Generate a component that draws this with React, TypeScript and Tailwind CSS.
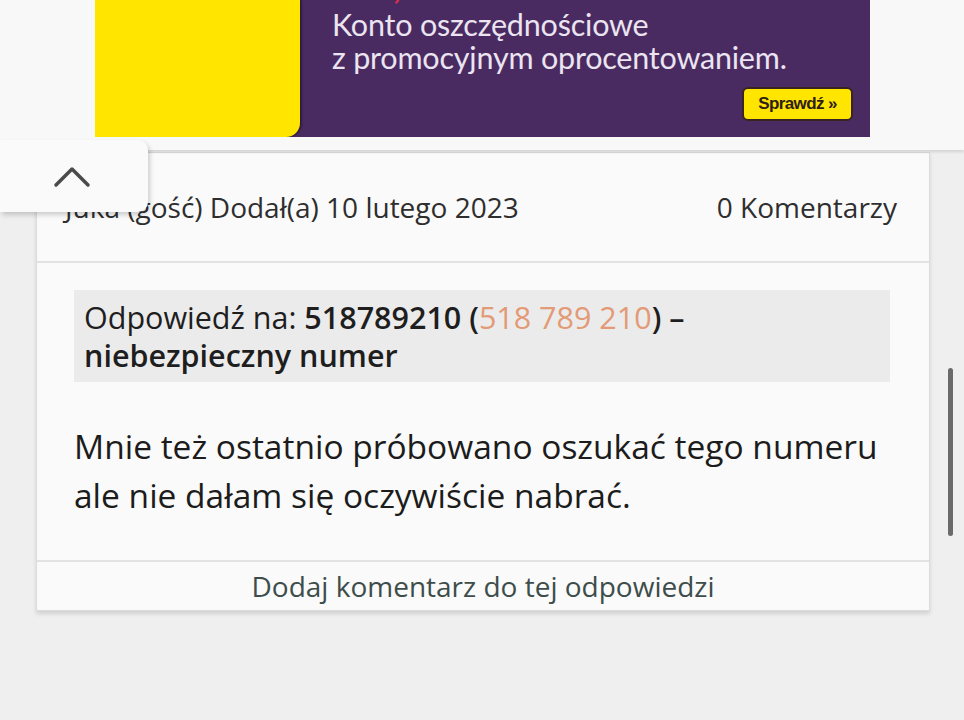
import React from "react";

export default function App() {
  const font = { fontFamily: '"Open Sans", "Noto Sans", sans-serif' };
  return (
    <div className="relative w-[964px] h-[720px] overflow-hidden bg-[#efefef]" style={font}>
      {/* top band with ad */}
      <div className="h-[150px] bg-[#f8f8f8] shadow-[0_2px_3px_rgba(0,0,0,0.12)] relative z-10">
        <div className="ml-[95px] w-[775px] h-[137px] bg-[#4a2b61] relative overflow-hidden flex">
          <div className="w-[205px] h-full bg-[#ffe500] rounded-br-[14px] shadow-[2px_0_2px_rgba(0,0,0,0.35)] shrink-0" />
          <div className="flex-1 relative pl-[32px]">
            <div className="absolute left-[20px] top-[-31px] text-[34px] font-bold text-[#f2eef6] whitespace-nowrap leading-[34px]" style={{ fontFamily: 'Lato, sans-serif' }}>
              Do <span className="text-[#e0314a]">7,00%</span> w skali roku
            </div>
            <div className="pt-[8px] text-[30.5px] leading-[33px] text-[#ebe4f1] tracking-[-0.2px]" style={{ fontFamily: 'Lato, sans-serif' }}>
              <div>Konto oszczędnościowe</div>
              <div>z promocyjnym oprocentowaniem.</div>
            </div>
            <div className="absolute left-[442px] top-[87px] w-[111px] h-[34px] rounded-[6px] bg-[#ffe500] border-2 border-[#3a2420] flex items-center justify-center text-[17px] font-bold text-[#2e2016] tracking-[-0.6px]" style={{ fontFamily: '"Liberation Sans", Arial, sans-serif' }}>
              Sprawdź »
            </div>
          </div>
        </div>
      </div>

      {/* card */}
      <div className="ml-[36px] mt-[2px] w-[894px] bg-[#fafafa] border border-[#dcdcdc] shadow-[0_3px_4px_rgba(0,0,0,0.12)]">
        <div className="h-[110px] flex items-center justify-between pl-[28px] pr-[32px] border-b-2 border-[#e2e2e2] text-[28px] text-[#2e2e2e]">
          <span>Juka (gość) Dodał(a) 10 lutego 2023</span>
          <span>0 Komentarzy</span>
        </div>
        <div className="pt-[27px] pl-[37px] pr-[39px]">
          <div className="bg-[#ebebeb] px-[10px] py-[8px] text-[30.5px] leading-[38px] text-[#1e1e1e]">
            Odpowiedź na: <span className="font-semibold">518789210 (</span>
            <span className="text-[#e39a76]">518 789 210</span>
            <span className="font-semibold">) –</span>
            <br />
            <span className="font-semibold">niebezpieczny numer</span>
          </div>
          <div className="pt-[40px] pb-[40px] text-[33.5px] leading-[49px] text-[#1c1c1c]">
            Mnie też ostatnio próbowano oszukać tego numeru
            <br />
            ale nie dałam się oczywiście nabrać.
          </div>
        </div>
        <div className="h-[50px] border-t-2 border-[#e2e2e2] flex items-center justify-center text-[28px] text-[#3d4d4b]">
          Dodaj komentarz do tej odpowiedzi
        </div>
      </div>

      {/* scroll-to-top tab */}
      <div className="absolute left-0 top-[140px] w-[148px] h-[72px] bg-[#fafafa] rounded-r-[10px] shadow-[2px_3px_5px_rgba(0,0,0,0.18)] z-20 flex items-center pl-[53px] pt-[2px]">
        <svg width="38" height="24" viewBox="0 0 38 24" fill="none">
          <path d="M3 20 L19 4 L35 20" stroke="#4a4a4a" strokeWidth="3.5" strokeLinecap="round" strokeLinejoin="round" />
        </svg>
      </div>

      {/* scrollbar */}
      <div className="absolute left-[948px] top-[368px] w-[5px] h-[168px] rounded-full bg-[#6a6a6a]" />
    </div>
  );
}
